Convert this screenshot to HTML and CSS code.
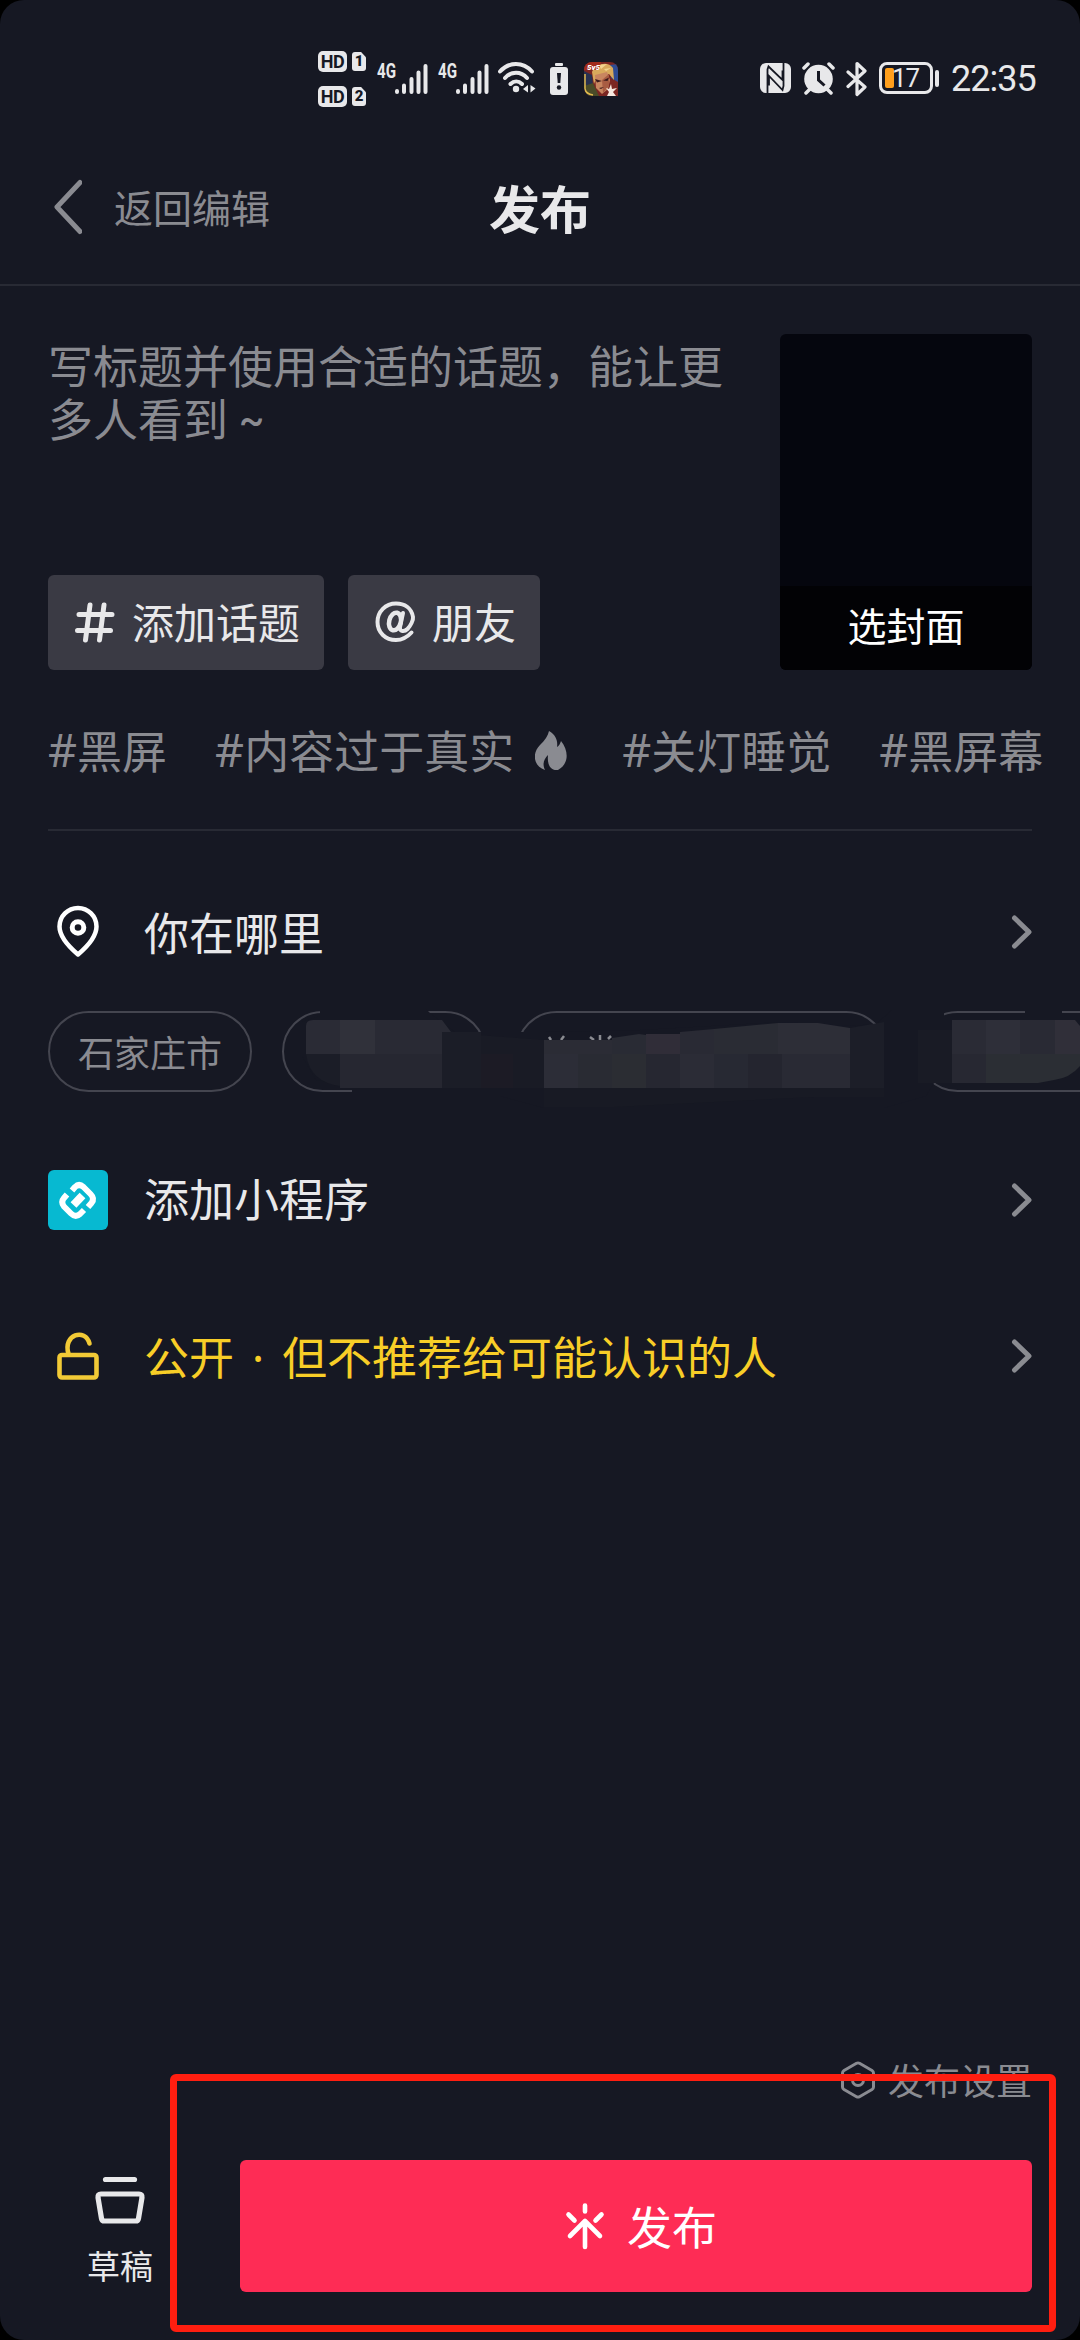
FILE: index.html
```html
<!DOCTYPE html>
<html lang="zh-CN">
<head>
<meta charset="utf-8">
<title>发布</title>
<link rel="stylesheet" href="styles.css">
</head>
<body>
<div class="screen">
  <div class="status">
    <div class="hd">
      <div class="hd-row"><span class="hd-badge">HD</span><span class="sim">1</span></div>
      <div class="hd-row"><span class="hd-badge">HD</span><span class="sim">2</span></div>
    </div>
    <svg class="signal" width="51" height="38" viewBox="0 -4 51 38"><text class="net" x="0" y="16" textLength="19" lengthAdjust="spacingAndGlyphs">4G</text><path class="bars" d="M20 30v-1M27 30V23.500M34.500 30V17M41.500 30V10.500M48.500 30V4"/></svg>
    <svg class="signal signal-b" width="51" height="38" viewBox="0 -4 51 38"><text class="net" x="0" y="16" textLength="19" lengthAdjust="spacingAndGlyphs">4G</text><path class="bars" d="M20 30v-1M27 30V23.500M34.500 30V17M41.500 30V10.500M48.500 30V4"/></svg>
    <svg class="wifi" width="38" height="34" viewBox="0 0 38 34" fill="none" stroke="#e8e8ea" stroke-width="4" stroke-linecap="round"><path d="M2 10.500C11 .5 25 .5 34 10.500M7 17c6-7 16-7 22 0M12.500 23c3.500-3.500 8-3.500 11.500 0"/><circle cx="18" cy="28" r="3.200" fill="#e8e8ea" stroke="none"/><path d="M30 24v7.500l-5-3.500zM32.500 24v7.500l5-4z" fill="#e8e8ea" stroke="none"/></svg>
    <svg class="low" width="18" height="34" viewBox="0 0 18 34"><rect x="5" y="1" width="8" height="3" rx="1" fill="#e8e8ea"/><rect x="0" y="5" width="18" height="28" rx="3" fill="#e8e8ea"/><path d="M7 11h4l-.7 10H7.700z" fill="#161823"/><circle cx="9" cy="25.500" r="2.200" fill="#161823"/></svg>
    <svg class="game" width="34" height="34" viewBox="0 0 34 34"><defs><clipPath id="g"><path d="M8 0h18a8 8 0 0 1 8 8v26H8a8 8 0 0 1-8-8V8a8 8 0 0 1 8-8z"/></clipPath></defs><g clip-path="url(#g)"><rect width="34" height="34" fill="#7b2622"/><path d="M0 9l8 4 2 21H0z" fill="#27304f"/><path d="M26 3l8-1v18l-7-4z" fill="#2e4c94"/><path d="M8 10C11 2 24-2 29 6l1 12-5-6-12 2-3 8z" fill="#d9aa5c"/><path d="M15 3l8-1-6 5zM20 7l7-1-5 3z" fill="#f3d590"/><path d="M11 13l12-3 3 8-2 9-6 5-6-6z" fill="#c98660"/><path d="M18 18l7-6v12l-6 7z" fill="#a85c42"/><path d="M11 17l7 2-5 1.500zM19 18.500l6-3-1.500 3.500zM15 26l5-1-3 2z" fill="#3c1a1c"/><path d="M0 24l9-3 6 13H2z" fill="#4b4c28"/><path d="M22 26l3 1 2-5 1 5 5-1-4 4 3 4h-9l2-4z" fill="#f6e8df"/><path d="M0 0h17l-2 8H0z" fill="#a22b1c"/><text x="3" y="7.500" class="five">5v5</text><path d="M1 12V27q1 5 8 6" fill="none" stroke="#e0b94e" stroke-width="1.500"/></g></svg>
    <svg class="nfc" width="31" height="32" viewBox="0 0 31 32"><rect x="0" y="1" width="31" height="30" rx="6" fill="#e8e8ea"/><path d="M7.500 31V7.500l1-3L22.500 18V8.500M23.500 1v23l-1 4L9 14v9.500" fill="none" stroke="#161823" stroke-width="1.800"/></svg>
    <svg class="alarm" width="34" height="34" viewBox="0 0 34 34"><circle cx="16.500" cy="18" r="14.300" fill="#e8e8ea"/><path d="M2 7l4-4M31 7l-4-4M4 32l4-4M29 32l-4-4" stroke="#e8e8ea" stroke-width="3.500" stroke-linecap="round"/><path d="M16.500 10v9l6 5.500" stroke="#161823" stroke-width="3" fill="none"/></svg>
    <svg class="bt" width="22" height="36" viewBox="0 0 22 36" fill="none" stroke="#e8e8ea" stroke-width="3.200" stroke-linejoin="round" stroke-linecap="round"><path d="M2 11l17 15-8 7.500V2.500L19 10 2 25.500"/></svg>
    <div class="battery"><i class="charge"></i><span class="pct">17</span></div><i class="cap"></i>
    <span class="time">22:35</span>
  </div>

  <header class="nav">
    <a class="back"><svg width="34" height="58" viewBox="0 0 34 58"><path d="M32 4.500L9 29l23 24.500" fill="none" stroke="#8a8b91" stroke-width="5" stroke-linecap="round" stroke-linejoin="round"/></svg><span>返回编辑</span></a>
    <h1>发布</h1>
  </header>

  <section class="compose">
    <div class="editor">
      <p class="hint">写标题并使用合适的话题，能让更多人看到<span class="tilde">~</span></p>
      <div class="actions">
        <button class="add"><svg width="40" height="42" viewBox="0 0 40 42" fill="none" stroke="#e8e8ea" stroke-width="5" stroke-linecap="round"><path d="M4 13.500h33M2.500 29.500h33M15 4l-4.500 35M29 4l-4.500 35"/></svg><span>添加话题</span></button>
        <button class="add friend"><svg width="42" height="42" viewBox="0 0 42 42" fill="none" stroke="#e8e8ea" stroke-width="4" stroke-linecap="round"><ellipse cx="20" cy="20.500" rx="5.800" ry="9" transform="rotate(14 20 20.500)" stroke-width="4.500"/><path d="M28 12l-3 14c-.8 5 4.500 5 7.500 2 3-3 6-9 5.500-12C36.500 7 29.500 2.500 21 2.500 10.500 2.500 2.500 10.500 2.500 21S10.500 39 21 39c6.500 0 11-2.500 15.500-7.500"/></svg><span>朋友</span></button>
      </div>
    </div>
    <div class="cover"><span>选封面</span></div>
  </section>

  <div class="tags">
    <span class="tag"><b>#</b>黑屏</span>
    <span class="tag"><b>#</b>内容过于真实<svg class="flame" width="32" height="40" viewBox="0 0 32 40"><path d="M14 0c7 4 9 10 8 16 2-1 3-3 4-6 8 10 8 23-3 29-8 1-11-6-10-15-4 4-6 9-3 15C-2 35-3 22 5 14 10 9 13 5 14 0z" fill="#8a8b91"/></svg></span>
    <span class="tag"><b>#</b>关灯睡觉</span>
    <span class="tag"><b>#</b>黑屏幕</span>
  </div>

  <main class="options">
    <div class="row place">
      <svg class="icon" width="60" height="60" viewBox="0 0 60 60" fill="none" stroke="#fff" stroke-width="4.500"><path d="M30 52.500C20 44 11.500 34 11.500 24.500a18.500 18.500 0 0 1 37 0C48.500 34 40 44 30 52.500z" stroke-linejoin="round"/><circle cx="30" cy="25.500" r="5.800" stroke-width="5"/></svg>
      <span class="label">你在哪里</span>
      <svg class="chev" width="24" height="38" viewBox="0 0 24 38"><path d="M4.500 5L19 19 4.500 33"/></svg>
    </div>
    <div class="chips">
      <span class="chip">石家庄市</span><span class="chip c2"></span><span class="chip c3"></span><span class="chip c4"></span>
      <svg class="mosaic" width="800" height="112" viewBox="280 1000 800 112">
        <path d="M320 1008H425L431 1014L455 1032H545L640 1030L780 1022L850 1026L876 1024L892 1010H944V1017H1080V1083H934L926 1096L884 1108H544L500 1096H352V1086L316 1080L302 1056V1022L320 1016Z" fill="#161823"/>
        <path d="M1025 1009h37v6h-37z" fill="#161823"/>
        <path d="M478 1035l66 5v48h-44l-40-5z" fill="#191b25"/>
        <path d="M481 1054h32v34h-32z" fill="#1c1b25"/>
        <path d="M306 1026q0-6 7-6h27v34h-34z" fill="#2a2b35"/>
        <path d="M340 1020h35v34h-35z" fill="#30313a"/>
        <path d="M375 1020h67l9 12v22h-76z" fill="#292a34"/>
        <path d="M442 1032h39v56h-39z" fill="#1b1d27"/>
        <path d="M306 1054h34v32q-30-4-34-32z" fill="#1b1d27"/>
        <path d="M340 1054h102v34H340z" fill="#262731"/>
        <path class="peek" d="M551 1040l-2-3M561 1040l3-4M590 1037l4 3M600 1035v5M608 1039l3-3"/>
        <path d="M544 1040h68v14h-68z" fill="#2b2c35"/>
        <path d="M612 1038l27-4 7 1v19h-34z" fill="#292b34"/>
        <path d="M646 1034h34v20h-34z" fill="#302d38"/>
        <path d="M680 1032l34-3v25h-34z" fill="#292a34"/>
        <path d="M714 1029l64-6v31h-64z" fill="#2a2c34"/>
        <path d="M778 1023h40l32 5v26h-72z" fill="#2d2e37"/>
        <path d="M544 1054h34v34h-34z" fill="#2c2d37"/>
        <path d="M578 1054h34v34h-34z" fill="#292b33"/>
        <path d="M612 1054h34v34h-34z" fill="#2b2d33"/>
        <path d="M646 1054h34v34h-34z" fill="#262731"/>
        <path d="M680 1054h34v34h-34z" fill="#2b2c36"/>
        <path d="M714 1054h34v34h-34z" fill="#272933"/>
        <path d="M748 1054h34v34h-34z" fill="#24252f"/>
        <path d="M782 1054h68v34h-68z" fill="#292a34"/>
        <path d="M850 1028l34-6v66h-34z" fill="#1c1e28"/>
        <path d="M544 1088h340v9h-70l-200 10h-70z" fill="#181a24"/>
        <path d="M918 1030h34v53h-34z" fill="#191b25"/>
        <path d="M952 1020h34v34h-34z" fill="#2a2b35"/>
        <path d="M986 1020h34v34h-34z" fill="#2e2f39"/>
        <path d="M1020 1020h35v34h-35z" fill="#292a34"/>
        <path d="M1055 1020h20l5 6v28h-25z" fill="#302f39"/>
        <path d="M952 1054h34v29h-34z" fill="#272832"/>
        <path d="M986 1054h94v12q-10 12-26 14l-16 3h-52z" fill="#2b2e34"/>
      </svg>
    </div>
    <div class="row mini">
      <svg class="icon" width="60" height="60" viewBox="0 0 60 60"><rect width="60" height="60" rx="6" fill="#07b9d1"/><g fill="none" stroke="#fff" stroke-width="6" stroke-linejoin="round"><path d="M24 20.500l3-3.500q4-4 8.500 0l7 7q4.500 4.500 1 9L40 37"/><path d="M19 24.500L16 28q-3.500 4 0 8.500l7 7q4.500 4.500 9 .5l4-4"/><path d="M25.500 35l9-9.500" stroke-width="8" stroke-linejoin="miter"/></g></svg>
      <span class="label">添加小程序</span>
      <svg class="chev" width="24" height="38" viewBox="0 0 24 38"><path d="M4.500 5L19 19 4.500 33"/></svg>
    </div>
    <div class="row privacy">
      <svg class="icon" width="60" height="60" viewBox="0 0 60 60" fill="none" stroke="#f2ca36" stroke-width="4.600" stroke-linecap="round"><rect x="11.500" y="29" width="37" height="22.500" rx="2.500"/><path d="M20.500 28c-6-20 17-26 21-10.500"/></svg>
      <span class="label">公开<span class="dot">·</span>但不推荐给可能认识的人</span>
      <svg class="chev" width="24" height="38" viewBox="0 0 24 38"><path d="M4.500 5L19 19 4.500 33"/></svg>
    </div>
  </main>

  <footer class="bottom">
    <div class="settings"><svg width="36" height="40" viewBox="0 0 36 40" fill="none" stroke="#8a8b91" stroke-width="3" stroke-linejoin="round"><path d="M16.500 3.300q1.500-.8 3 0L32 10.500q1.500 1 1.500 2.500v14q0 1.500-1.500 2.500L19.500 36.700q-1.500.8-3 0L4 29.500Q2.500 28.500 2.500 27V13q0-1.500 1.500-2.500z"/><circle cx="18" cy="20" r="5.500"/></svg><span>发布设置</span></div>
    <div class="bar">
      <div class="draft"><svg width="54" height="52" viewBox="0 0 54 52" fill="none" stroke="#e8e8ea" stroke-width="5.200" stroke-linecap="round" stroke-linejoin="round"><path d="M12.500 5.500h29"/><path d="M8 20h38q3.500 0 3 3.500l-3.500 21q-.4 2.500-3 2.500h-31q-2.600 0-3-2.500L5 23.500Q4.500 20 8 20z"/></svg><span>草稿</span></div>
      <button class="publish"><svg width="40" height="48" viewBox="0 0 40 48" fill="none" stroke="#fff" stroke-width="4.600" stroke-linecap="round" stroke-linejoin="round"><path d="M20 3.500v6M3.500 12.500l6 6M36.500 12.500l-6 6M20 45V19M5 34l15-15 15 15"/></svg><span>发布</span></button>
    </div>
  </footer>
  <div class="frame"></div>
</div>
</body>
</html>
```
FILE: styles.css
```css
* { box-sizing: border-box; }
body { margin: 0; background: #000; }
svg { display: block; flex: none; }
button { border: 0; padding: 0; margin: 0; font: inherit; color: inherit; }
.screen {
  position: relative; width: 1080px; height: 2340px; overflow: hidden;
  display: flex; flex-direction: column;
  background: #161823; color: #e8e8ea; border-radius: 24px;
  font-family: "Noto Sans CJK SC", sans-serif; white-space: nowrap;
}

.status { height: 140px; padding: 51px 0 0 318px; display: flex; align-items: flex-start; font-family: Roboto, sans-serif; }
.hd { display: flex; flex-direction: column; gap: 14px; width: 59px; }
.hd-row { display: flex; align-items: center; gap: 5px; height: 21px; }
.hd-badge { width: 29px; height: 21px; border-radius: 5px; background: #e8e8ea; color: #161823; font: 700 18px/21px Roboto, sans-serif; text-align: center; letter-spacing: -.5px; }
.sim { width: 14px; height: 19px; border-radius: 3px; background: #e8e8ea; color: #161823; font: 900 15px/19px Roboto, sans-serif; text-align: center; clip-path: polygon(0 0, 65% 0, 100% 28%, 100% 100%, 0 100%); }
.signal { margin-top: 7px; overflow: visible; }
.signal-b { margin-left: 10px; }
.net { font: 700 20px Roboto, sans-serif; fill: #e8e8ea; }
.bars { fill: none; stroke: #e8e8ea; stroke-width: 4; stroke-linecap: round; }
.wifi { margin: 10px 0 0 9px; }
.low { margin: 11px 0 0 14px; }
.game { margin: 11px 0 0 16px; }
.five { font: italic 900 8px Roboto, sans-serif; fill: #fff; }
.nfc { margin: 11px 0 0 142px; }
.alarm { margin: 10px 0 0 11px; }
.bt { margin: 10px 0 0 10px; }
.battery { margin: 11px 0 0 11px; width: 54px; height: 32px; border: 3px solid #e8e8ea; border-radius: 8px; display: flex; align-items: center; padding-left: 3px; }
.charge { width: 9px; height: 20px; border-radius: 2px; background: #ff9f1c; }
.pct { font: 400 26px/26px Roboto, sans-serif; margin-left: -2px; letter-spacing: -1px; }
.cap { width: 4px; height: 17px; margin: 19px 0 0 2px; border-radius: 2px; background: #e8e8ea; }
.time { font: 400 36px/40px Roboto, sans-serif; margin: 8px 0 0 12px; letter-spacing: -1px; }

.nav { height: 146px; border-bottom: 2px solid #282a34; display: grid; grid-template-columns: 1fr auto 1fr; align-items: center; padding: 0 48px 10px; }
.back { display: flex; align-items: center; gap: 32px; color: #8a8b91; font-size: 39px; line-height: 58px; }
.back span { padding-bottom: 2px; }
.nav h1 { margin: 0; font-size: 51px; line-height: 60px; font-weight: 700; color: #e8e8ea; }

.compose { padding: 48px 48px 0; display: flex; justify-content: space-between; height: 384px; }
.editor { display: flex; flex-direction: column; justify-content: space-between; height: 336px; }
.hint { margin: 4px 0 0; width: 680px; white-space: normal; font-size: 45px; line-height: 53px; color: #8a8b91; }
.tilde { font: 500 38px/30px Roboto, sans-serif; margin-left: 11px; vertical-align: 4px; }
.actions { display: flex; gap: 24px; }
.add { width: 276px; height: 95px; border-radius: 6px; background: #3a3a44; display: flex; align-items: center; gap: 17px; padding-left: 27px; font-size: 42px; line-height: 60px; }
.add svg { margin-bottom: 2px; }
.add span { padding-bottom: 3px; }
.friend { width: 192px; gap: 15px; }
.cover { width: 252px; height: 336px; border-radius: 6px; background: #05060e; display: flex; flex-direction: column; justify-content: flex-end; overflow: hidden; }
.cover span { height: 84px; background: #020205; color: #fff; font-size: 39px; line-height: 77px; text-align: center; }

.tags { margin: 0 48px; height: 161px; border-bottom: 2px solid #282a34; display: flex; gap: 48px; color: #8a8b91; font-size: 45px; line-height: 162px; }
.tag { display: flex; align-items: center; flex: none; }
.tag b { font-family: "Noto Sans", sans-serif; font-weight: 400; }
.flame { margin: 2px 7px 0 21px; }

.row { display: flex; align-items: center; padding: 0 46px 0 48px; height: 60px; font-size: 45px; line-height: 60px; }
.label { margin-left: 36px; flex: 1; }
.chev path { fill: none; stroke: #8a8b91; stroke-width: 5; stroke-linecap: round; stroke-linejoin: round; }
.place { margin-top: 71px; }
.chips { position: relative; display: flex; gap: 30px; margin-top: 49px; padding-left: 48px; height: 81px; }
.chip { flex: none; width: 204px; height: 81px; border: 2px solid #44454f; border-radius: 41px; text-align: center; font-size: 36px; line-height: 77px; color: #8a8b91; }
.c2 { width: 204px; }
.c3 { width: 371px; }
.c4 { width: 300px; }
.mosaic { position: absolute; left: 280px; top: -11px; }
.peek { fill: none; stroke: #8a8b91; stroke-width: 2.5; }
.mini { margin-top: 78px; }
.mini .label { padding-bottom: 5px; }
.privacy { margin-top: 96px; color: #f8ce27; }
.dot { display: inline-block; width: 48px; text-align: center; font-family: "Noto Sans", sans-serif; line-height: 45px; }

.bottom { margin-top: auto; height: 290px; }
.settings { display: flex; justify-content: flex-end; align-items: center; gap: 12px; height: 60px; padding-right: 48px; color: #8a8b91; font-size: 36px; line-height: 60px; }
.settings span { padding-bottom: 3px; }
.bar { display: flex; margin-top: 50px; padding-right: 48px; }
.draft { width: 240px; height: 132px; display: flex; flex-direction: column; align-items: center; padding-top: 14px; gap: 15px; font-size: 33px; line-height: 48px; }
.publish { flex: 1; height: 132px; border-radius: 6px; background: #fe2c55; color: #fff; display: flex; align-items: center; justify-content: center; gap: 22px; padding-left: 10px; font-size: 45px; line-height: 60px; }
.frame { position: absolute; left: 170px; top: 2074px; width: 886px; height: 258px; border: 7px solid #ff1e10; border-radius: 6px; }
```
